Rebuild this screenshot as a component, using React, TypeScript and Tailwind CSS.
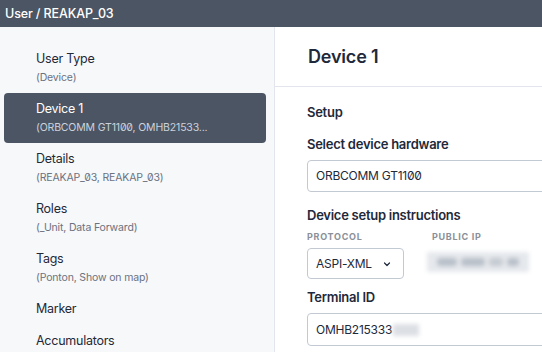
import React from "react";

const items = [
  { title: "User Type", sub: "(Device)" },
  { title: "Device 1", sub: "(ORBCOMM GT1100, OMHB21533...", active: true },
  { title: "Details", sub: "(REAKAP_03, REAKAP_03)" },
  { title: "Roles", sub: "(_Unit, Data Forward)" },
  { title: "Tags", sub: "(Ponton, Show on map)" },
  { title: "Marker" },
  { title: "Accumulators" },
];

export default function App() {
  return (
    <div className="w-[542px] h-[352px] overflow-hidden flex flex-col bg-white font-['Inter',sans-serif]">
      <div className="h-[27px] shrink-0 bg-[#4b5563] text-white text-[12.5px] tracking-[-0.01em] leading-[27px] pl-[5px] font-medium">
        User / REAKAP_03
      </div>
      <div className="flex flex-1 min-h-0">
        <div className="w-[275px] shrink-0 bg-[#f7f8fa] border-r border-[#e2e6ec] pt-4 pl-1 pr-2 flex flex-col">
          {items.map((it) => (
            <div
              key={it.title}
              className={
                "pl-8 py-1.5 rounded-[4px] " +
                (it.active ? "bg-[#4b5563]" : "")
              }
            >
              <div
                className={
                  "text-[12.5px] tracking-[-0.02em] leading-5 " +
                  (it.active ? "text-white" : "text-[#1f2937]")
                }
              >
                {it.title}
              </div>
              {it.sub && (
                <div
                  className={
                    "text-[10.5px] tracking-[-0.015em] leading-[18px] whitespace-nowrap [font-feature-settings:'zero'] " +
                    (it.active ? "text-[#cbd2dc]" : "text-[#6b7280]")
                  }
                >
                  {it.sub}
                </div>
              )}
            </div>
          ))}
        </div>
        <div className="flex-1 min-w-0 flex flex-col">
          <div className="h-[60px] shrink-0 border-b border-[#e2e6ec] flex items-center pl-[33px]">
            <h1 className="text-[18px] tracking-[-0.01em] font-semibold text-[#1e293b]">Device 1</h1>
          </div>
          <div className="pl-[32px] pt-[15px] flex flex-col">
            <div className="text-[13px] tracking-[-0.02em] leading-5 font-semibold text-[#1e293b]">Setup</div>
            <div className="mt-3 text-[13px] tracking-[-0.02em] leading-5 font-semibold text-[#1e293b]">
              Select device hardware
            </div>
            <div className="mt-[6px] w-[300px] h-[32px] border border-[#c3c9d3] rounded-[4px] flex items-center pl-[8px] text-[12px] tracking-[-0.02em] text-[#1e293b] [font-feature-settings:'zero'] shrink-0">
              ORBCOMM GT1100
            </div>
            <div className="mt-[13px] text-[13px] tracking-[-0.02em] leading-5 font-semibold text-[#1e293b]">
              Device setup instructions
            </div>
            <div className="flex mt-[5px]">
              <div className="w-[125px]">
                <div className="text-[9px] leading-[14px] font-bold tracking-[0.08em] text-[#8a8f98]">PROTOCOL</div>
                <div className="mt-[4px] w-[97px] h-[31px] border border-[#c3c9d3] rounded-[4px] flex items-center pl-[8px] pr-[12px] justify-between text-[12px] tracking-[-0.02em] text-[#1e293b]">
                  <span>ASPI-XML</span>
                  <svg width="8" height="8" viewBox="0 0 8 8" fill="none" stroke="#1e293b" strokeWidth="1.2" strokeLinecap="round" strokeLinejoin="round">
                    <path d="M1.5 3 L4 5.5 L6.5 3" />
                  </svg>
                </div>
              </div>
              <div>
                <div className="text-[9px] leading-[14px] font-bold tracking-[0.08em] text-[#8a8f98]">PUBLIC IP</div>
                <div className="mt-[8px] -ml-[5px] w-[102px] h-[20px] rounded-[2px] bg-[#e5e8ec] blur-[2px] flex items-center justify-around px-2">
                  <span className="w-[20px] h-[8px] bg-[#b9c0c9] rounded-full" />
                  <span className="w-[24px] h-[8px] bg-[#b9c0c9] rounded-full" />
                  <span className="w-[14px] h-[8px] bg-[#c5cbd2] rounded-full" />
                  <span className="w-[12px] h-[8px] bg-[#b9c0c9] rounded-full" />
                </div>
              </div>
            </div>
            <div className="mt-[8px] text-[13px] tracking-[-0.02em] leading-5 font-semibold text-[#1e293b]">Terminal ID</div>
            <div className="mt-[6px] w-[300px] h-[33px] border border-[#c3c9d3] rounded-[4px] flex items-center pl-[8px] text-[12px] tracking-[-0.02em] text-[#1e293b] shrink-0">
              OMHB215333
              <span className="ml-[1px] w-[26px] h-[12px] bg-[#dcdfe4] blur-[2px]" />
            </div>
          </div>
        </div>
      </div>
    </div>
  );
}
